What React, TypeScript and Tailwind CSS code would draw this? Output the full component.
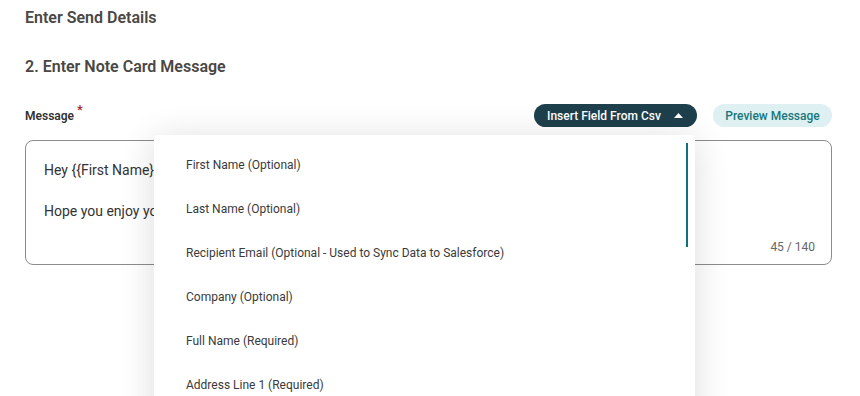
const fields = [
  'First Name (Optional)',
  'Last Name (Optional)',
  'Recipient Email (Optional - Used to Sync Data to Salesforce)',
  'Company (Optional)',
  'Full Name (Required)',
  'Address Line 1 (Required)',
];

function FieldMenu() {
  return (
    <div className="absolute left-[129px] top-[31px] z-10 h-[300px] w-[541px] overflow-hidden rounded bg-white pt-[8px] shadow-[0_4px_36px_rgba(0,0,0,0.14)]">
      <div className="absolute right-[7px] top-[8px] h-[104px] w-[2px] bg-[#12707a]" />
      {fields.map((field, key) => (
        <div
          key={`csv-field-${key}`}
          className="flex h-[44px] items-center pl-[32px] text-[12px] text-[#3a3a3a]"
        >
          {field}
        </div>
      ))}
    </div>
  );
}

export default function App() {
  return (
    <div className="h-[396px] overflow-hidden bg-white pl-[25px] pr-[28px] pt-[8px] font-['Roboto',sans-serif]">
      <h2 className="text-[16px] font-semibold leading-[20px] text-[#4a4744]">Enter Send Details</h2>
      <h3 className="mt-[29px] text-[16px] font-semibold leading-[20px] text-[#4a4744]">2. Enter Note Card Message</h3>

      <div className="relative mt-[27px]">
        <div className="flex h-[23px] items-center justify-between">
          <label className="text-[12px] font-semibold text-[#333]">
            Message<sup className="relative -top-[6px] ml-[3px] text-[13px] text-[#a3282f]">*</sup>
          </label>
          <div className="flex items-center gap-[16px]">
            <button className="flex h-[23px] w-[163px] items-center gap-[13px] rounded-full bg-[#1e3f4c] pl-[13px] text-[12px] font-medium text-white">
              Insert Field From Csv
              <svg width="9" height="5" viewBox="0 0 9 5" className="fill-white">
                <path d="M0 5 L4.5 0 L9 5 Z" />
              </svg>
            </button>
            <button className="flex h-[23px] w-[119px] items-center justify-center rounded-full bg-[#def0f1] text-[12px] font-medium text-[#18777d]">
              Preview Message
            </button>
          </div>
        </div>

        <div className="mt-[13px] flex h-[125px] flex-col justify-between rounded-lg border border-[#8c8c8c] pb-[9px] pl-[18px] pr-[16px] pt-[19px] text-[14px] leading-[20.5px] text-[#333]">
          <div>
            <p>Hey {'{{First Name}}'},</p>
            <p>&nbsp;</p>
            <p>Hope you enjoy your swag!</p>
          </div>
          <span className="self-end text-[12px] leading-[16px] text-[#666]">45 / 140</span>
        </div>

        <FieldMenu />
      </div>
    </div>
  );
}
